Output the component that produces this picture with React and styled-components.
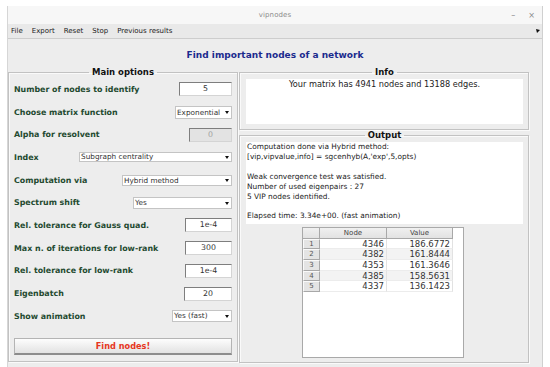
import React from 'react';
import styled, { createGlobalStyle } from 'styled-components';

const GlobalStyle = createGlobalStyle`
  html, body { margin: 0; padding: 0; background: #fff; }
  body { font-family: "DejaVu Sans", "Liberation Sans", sans-serif; }
`;

const options = [
  { label: 'Number of nodes to identify', kind: 'input', value: '5', w: 53 },
  { label: 'Choose matrix function', kind: 'select', value: 'Exponential', w: 57, h: 13 },
  { label: 'Alpha for resolvent', kind: 'input', value: '0', w: 43, disabled: true },
  { label: 'Index', kind: 'select', value: 'Subgraph centrality', w: 153, h: 10 },
  { label: 'Computation via', kind: 'select', value: 'Hybrid method', w: 110, h: 11 },
  { label: 'Spectrum shift', kind: 'select', value: 'Yes', w: 99, h: 12 },
  { label: 'Rel. tolerance for Gauss quad.', kind: 'input', value: '1e-4', w: 47 },
  { label: 'Max n. of iterations for low-rank', kind: 'input', value: '300', w: 47 },
  { label: 'Rel. tolerance for low-rank', kind: 'input', value: '1e-4', w: 47 },
  { label: 'Eigenbatch', kind: 'input', value: '20', w: 48 },
  { label: 'Show animation', kind: 'select', value: 'Yes (fast)', w: 60, h: 12 },
];

const outputLines = [
  'Computation done via Hybrid method:',
  "[vip,vipvalue,info] = sgcenhyb(A,'exp',5,opts)",
  '',
  'Weak convergence test was satisfied.',
  'Number of used eigenpairs : 27',
  '5 VIP nodes identified.',
  '',
  'Elapsed time: 3.34e+00. (fast animation)',
];

const results = [
  ['4346', '186.6772'],
  ['4382', '161.8444'],
  ['4353', '161.3646'],
  ['4385', '158.5631'],
  ['4337', '136.1423'],
];

const App = () => {
  return (
    <>
      <GlobalStyle />
      <Window>
        <TitleBar>
          <span />
          <WinTitle>vipnodes</WinTitle>
          <WinControls>
            <span>–</span>
            <span>×</span>
          </WinControls>
        </TitleBar>
        <MenuBar>
          <MenuItem>File</MenuItem>
          <MenuItem>Export</MenuItem>
          <MenuItem>Reset</MenuItem>
          <MenuItem>Stop</MenuItem>
          <MenuItem>Previous results</MenuItem>
          <Undock>
            <svg width="4" height="4" viewBox="0 0 4 4">
              <path d="M0 0 L4 1 L1 4 Z" fill="#111" />
            </svg>
          </Undock>
        </MenuBar>

        <Heading>Find important nodes of a network</Heading>

        <Columns>
          <Panel $pad="1px 5px 6px 5px">
            <Legend align="center">Main options</Legend>
            {options.map((o) => (
              <Row key={o.label}>
                <Label>{o.label}</Label>
                {o.kind === 'input' ? (
                  <Field $w={o.w} $disabled={o.disabled}>{o.value}</Field>
                ) : (
                  <Dropdown $w={o.w} $h={o.h}>{o.value}</Dropdown>
                )}
              </Row>
            ))}
            <FindButton>Find nodes!</FindButton>
          </Panel>

          <RightCol>
            <Panel $pad="1px 5px 5px 6px">
              <Legend align="center">Info</Legend>
              <InfoBox>Your matrix has 4941 nodes and 13188 edges.</InfoBox>
            </Panel>
            <Panel $pad="1px 5px 4px 6px">
              <Legend align="center">Output</Legend>
              <OutputBox>
                {outputLines.map((l, i) => (
                  <OutLine key={i}>{l || '\u00a0'}</OutLine>
                ))}
              </OutputBox>
              <TableWrap>
                <Grid>
                  <HeadCell />
                  <HeadCell>Node</HeadCell>
                  <HeadCell>Value</HeadCell>
                  {results.map((r, idx) => (
                    <React.Fragment key={idx}>
                      <RowHead>{idx + 1}</RowHead>
                      <Cell $odd={idx % 2 === 1}>{r[0]}</Cell>
                      <Cell $odd={idx % 2 === 1}>{r[1]}</Cell>
                    </React.Fragment>
                  ))}
                </Grid>
              </TableWrap>
            </Panel>
          </RightCol>
        </Columns>
      </Window>
    </>
  );
};

const Window = styled.div`
  margin: 6px 0 0 7px;
  width: 536px;
  height: 361px;
  box-sizing: border-box;
  border-left: 1px solid #d6d6d6;
  border-right: 1px solid #d0d0d0;
  background: #ededed;
  overflow: hidden;
`;

const TitleBar = styled.div`
  height: 18px;
  background: #f7f7f7;
  display: grid;
  grid-template-columns: 1fr auto 1fr;
  align-items: center;
  font-size: 7px;
  color: #8c8c8c;
`;

const WinTitle = styled.span`
  letter-spacing: 0.1px;
`;

const WinControls = styled.div`
  justify-self: end;
  display: flex;
  gap: 13px;
  padding-right: 7px;
  font-size: 8px;
  color: #8a8a8a;
`;

const MenuBar = styled.div`
  height: 14px;
  background: #e9e9e9;
  border-bottom: 1px solid #cdcdcd;
  display: flex;
  align-items: center;
  gap: 9px;
  padding-left: 3px;
  font-size: 7px;
  color: #222;
`;

const MenuItem = styled.span``;

const Undock = styled.span`
  margin-left: auto;
  padding-right: 2px;
  display: flex;
`;

const Heading = styled.div`
  padding: 10px 0 6px;
  line-height: 12px;
  text-align: center;
  font-size: 9px;
  font-weight: bold;
  color: #1b2a8e;
`;

const Columns = styled.div`
  display: grid;
  grid-template-columns: 230px 290px;
  column-gap: 1px;
  align-items: start;
`;

const RightCol = styled.div`
  display: flex;
  flex-direction: column;
`;

const Panel = styled.fieldset`
  margin: 0;
  min-width: 0;
  box-sizing: border-box;
  padding: ${(p) => p.$pad};
  border: 1px solid #c2c2c2;
  box-shadow: inset 1px 1px 0 #fafafa, 1px 1px 0 #fafafa;
`;

const Legend = styled.legend`
  margin: 0 auto;
  padding: 0 3px;
  line-height: 10px;
  font-size: 8.5px;
  font-weight: bold;
  color: #111;
`;

const Row = styled.div`
  height: 22.7px;
  display: flex;
  align-items: center;
  justify-content: space-between;
`;

const Label = styled.span`
  font-size: 7.9px;
  font-weight: bold;
  color: #244a30;
  white-space: nowrap;
`;

const Field = styled.div`
  width: ${(p) => p.$w}px;
  height: 14px;
  box-sizing: border-box;
  border: 1px solid;
  border-color: #7e7e7e #d4d4d4 #d4d4d4 #7e7e7e;
  background: ${(p) => (p.$disabled ? '#e3e3e3' : '#fff')};
  color: ${(p) => (p.$disabled ? '#a0a0a0' : '#333')};
  font-size: 7.8px;
  line-height: 12px;
  text-align: center;
`;

const Dropdown = styled.div`
  position: relative;
  width: ${(p) => p.$w}px;
  height: ${(p) => p.$h}px;
  box-sizing: border-box;
  border: 1px solid #c4c4c4;
  background: #fff;
  padding-left: 1px;
  font-size: 7.3px;
  line-height: ${(p) => p.$h - 2}px;
  color: #333;
  white-space: nowrap;

  &::after {
    content: '';
    position: absolute;
    right: 2px;
    top: 50%;
    margin-top: -1px;
    border-left: 2px solid transparent;
    border-right: 2px solid transparent;
    border-top: 3px solid #111;
  }
`;

const FindButton = styled.div`
  margin-top: 10.7px;
  height: 17px;
  box-sizing: border-box;
  border: 1px solid #b4b4b4;
  border-bottom: 2px solid #8c8c8c;
  background: linear-gradient(#fdfdfd, #e2e2e2);
  color: #e6361d;
  font-size: 8.2px;
  font-weight: bold;
  line-height: 14px;
  text-align: center;
`;

const InfoBox = styled.div`
  margin-top: 1px;
  height: 45px;
  background: #fff;
  text-align: center;
  font-size: 8.2px;
  line-height: 10px;
  color: #222;
`;

const OutputBox = styled.div`
  margin-top: 1px;
  height: 82px;
  box-sizing: border-box;
  padding: 0 0 2px 1px;
  background: #fff;
  font-size: 7.4px;
  color: #222;
`;

const OutLine = styled.div`
  line-height: 9.9px;
  white-space: pre;
`;

const TableWrap = styled.div`
  margin: 3px 0 0 56px;
  width: 162px;
  height: 131px;
  box-sizing: border-box;
  border: 1px solid #a9a9a9;
  background: #fff;
`;

const Grid = styled.div`
  display: grid;
  grid-template-columns: 17px 67px 66px;
  grid-auto-rows: 10.7px;
  font-size: 8.5px;
  color: #333;
`;

const HeadCell = styled.div`
  height: 11px;
  box-sizing: border-box;
  border-right: 1px solid #a8a8a8;
  border-bottom: 1px solid #a8a8a8;
  background: linear-gradient(#f0f0f0, #e2e2e2);
  font-size: 7px;
  line-height: 10px;
  text-align: center;
  color: #444;
`;

const RowHead = styled.div`
  box-sizing: border-box;
  border: 1px solid;
  border-color: #fafafa #a8a8a8 #a8a8a8 #fafafa;
  background: #e4e4e4;
  font-size: 7px;
  line-height: 9px;
  text-align: center;
  color: #555;
`;

const Cell = styled.div`
  box-sizing: border-box;
  border-right: 1px solid #e2e2e2;
  border-bottom: 1px solid #ececec;
  background: ${(p) => (p.$odd ? '#f3f3f3' : '#fff')};
  padding-right: 2px;
  text-align: right;
  line-height: 10px;
`;

export default App;
